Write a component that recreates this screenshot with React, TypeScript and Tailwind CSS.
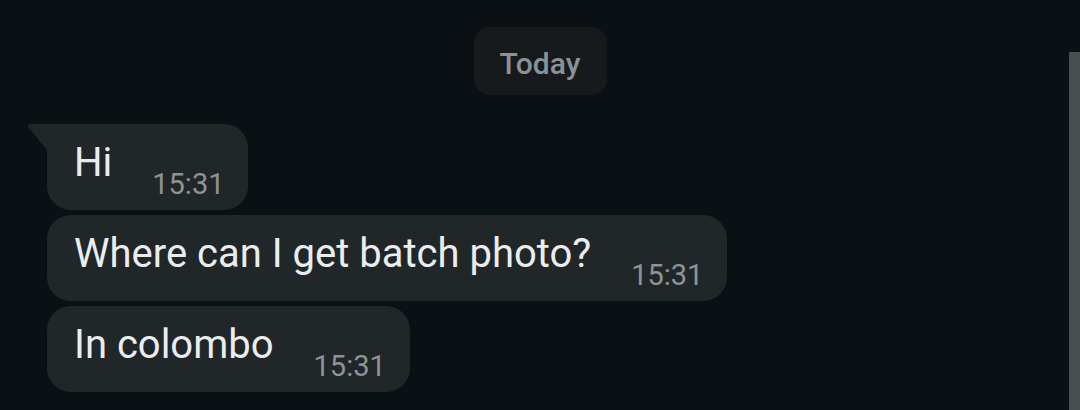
import React from "react";

const messages = [
  { id: 1, text: "Hi", time: "15:31", first: true },
  { id: 2, text: "Where can I get batch photo?", time: "15:31", first: false },
  { id: 3, text: "In colombo", time: "15:31", first: false },
];

function Bubble({ text, time, first }: { text: string; time: string; first: boolean }) {
  return (
    <div className="relative self-start">
      {first && (
        <svg className="absolute left-[-20px] top-0" width="21" height="28" viewBox="0 0 21 28">
          <path d="M21 0 L4 0 Q-1 0 2 4 L21 27 Z" fill="#212629" />
        </svg>
      )}
      <div
        className={`flex items-end bg-[#212629] pl-[27px] pr-[24px] pt-[15px] pb-[10px] ${
          first ? "rounded-[24px] rounded-tl-none" : "rounded-[24px]"
        }`}
      >
        <span className="mb-[13px] text-[40px] leading-[48px] text-[#e9edef]">{text}</span>
        <span className="ml-[40px] text-[29px] leading-[32px] text-[#8d9497]">{time}</span>
      </div>
    </div>
  );
}

export default function App() {
  return (
    <div
      className="flex h-[410px] w-[1080px] overflow-hidden bg-[#0b1014]"
      style={{ fontFamily: "Roboto, 'Noto Sans', sans-serif" }}
    >
      <div className="flex flex-1 flex-col">
        <div className="mt-[27px] flex justify-center pl-[11px]">
          <div className="flex h-[68px] w-[133px] items-center justify-center rounded-[16px] bg-[#161a1d] pt-[4px] text-[30px] font-medium text-[#8a9296]">
            Today
          </div>
        </div>
        <div className="mt-[29px] flex flex-col gap-[5px] pl-[47px]">
          {messages.map((m) => (
            <Bubble key={m.id} text={m.text} time={m.time} first={m.first} />
          ))}
        </div>
      </div>
      <div className="mt-[52px] w-[11px] bg-[#484f50]" />
    </div>
  );
}
